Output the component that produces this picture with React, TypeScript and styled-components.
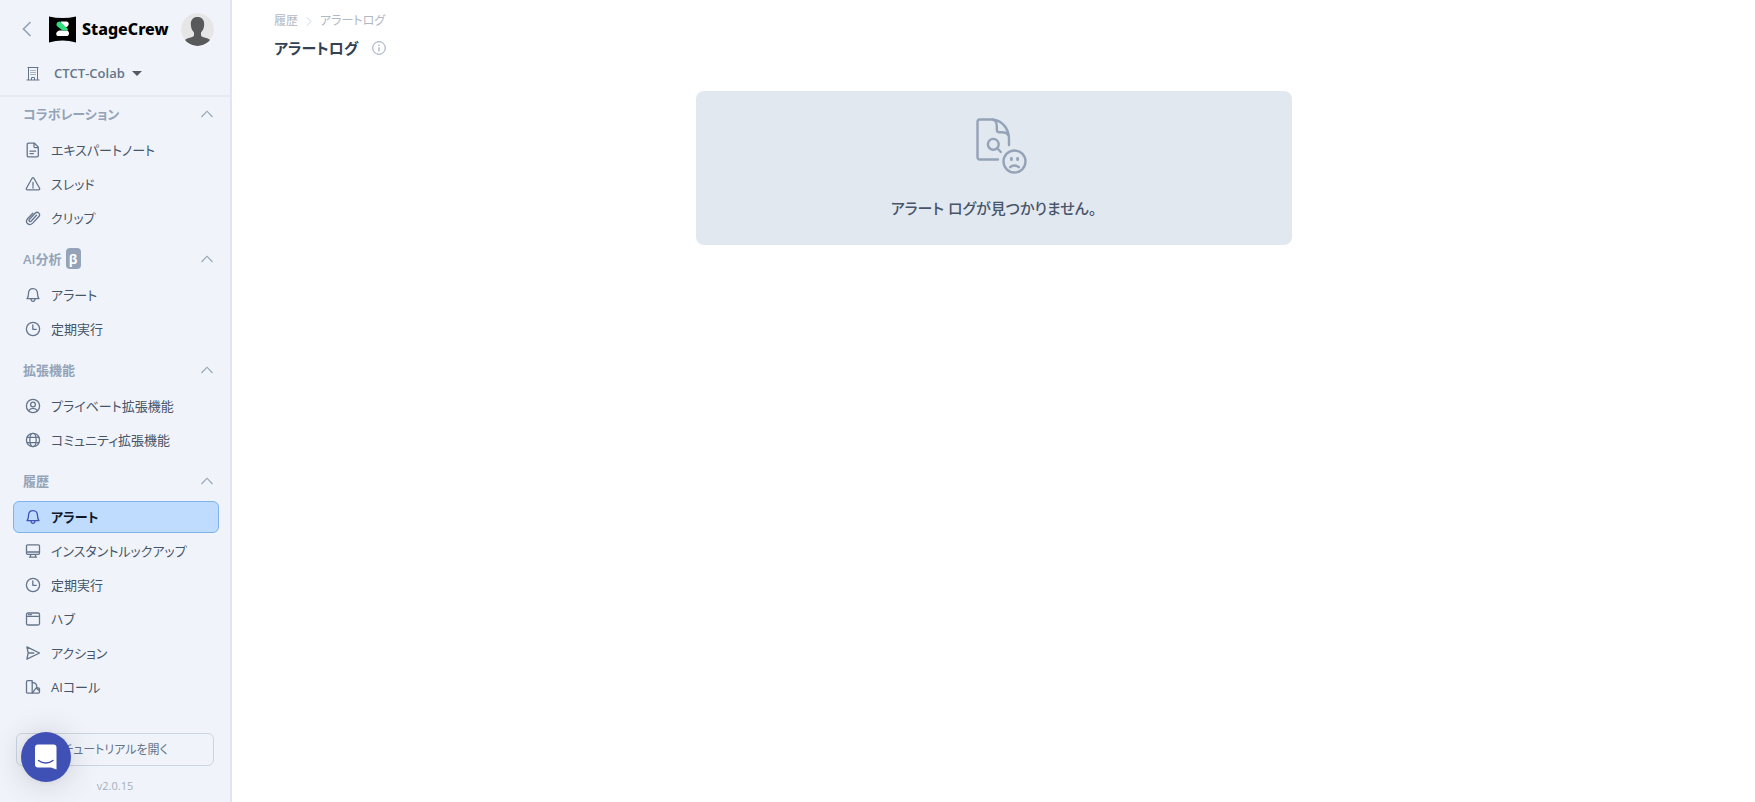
import React from "react";
import styled, { createGlobalStyle, css } from "styled-components";

const GlobalStyle = createGlobalStyle`
  *, *::before, *::after { box-sizing: border-box; }
  body {
    margin: 0;
    background: #fff;
    color: #475569;
    font-family: "Open Sans", "Noto Sans CJK JP", sans-serif;
    font-size: 13px;
    line-height: 20px;
    font-feature-settings: "palt";
  }
  button { font: inherit; font-feature-settings: inherit; color: inherit; background: none; border: 0; padding: 0; cursor: pointer; }
  a { color: inherit; text-decoration: none; }
  h1, h2, p, ul { margin: 0; padding: 0; }
  svg { display: block; flex: none; }
`;

const Shell = styled.div`
  display: flex;
  min-height: 100vh;
`;

const Sidebar = styled.aside`
  display: flex;
  flex-direction: column;
  flex: none;
  width: 232px;
  background: #f0f4fa;
  border-right: 2px solid #dfe6f1;
`;

const SidebarTop = styled.header`
  display: flex;
  flex-direction: column;
  padding: 12px 16px 11px 20px;
  border-bottom: 2px solid #e6ebf3;
`;

const BrandRow = styled.div`
  display: flex;
  align-items: center;
  height: 34px;
`;

const IconButton = styled.button`
  display: flex;
  align-items: center;
  justify-content: center;
  color: #94a3b8;
`;

const Brand = styled.a`
  display: flex;
  align-items: center;
  gap: 6px;
  margin-left: 15px;
  color: #000;
  font-family: "Noto Sans", sans-serif;
  font-size: 16px;
  font-weight: 800;
`;

const AvatarButton = styled(IconButton)`
  margin-left: auto;
  border-radius: 50%;
  overflow: hidden;
`;

const Workspace = styled.button`
  display: flex;
  align-items: center;
  align-self: flex-start;
  margin-top: 16px;
  padding-left: 6px;
  height: 22px;
  color: #64748b;
  font-size: 13px;
  font-weight: 600;
  gap: 7px;

  svg:first-child { margin-right: 7px; }
`;

const Nav = styled.nav`
  flex: 1;
  padding: 0 11px 0 13px;
`;

const Section = styled.section`
  margin-bottom: 8px;
`;

const SectionToggle = styled.button`
  display: flex;
  align-items: center;
  width: 100%;
  height: 33px;
  padding: 0 6px 0 10px;
  margin-bottom: 4px;
  color: #94a3b8;
  font-weight: 600;

  svg { margin-left: auto; }
`;

const Badge = styled.span`
  display: flex;
  align-items: center;
  justify-content: center;
  width: 15px;
  height: 21px;
  margin-left: 4px;
  border-radius: 4px;
  background: #94a3b8;
  color: #fff;
  font-weight: 700;
`;

const NavList = styled.ul`
  display: flex;
  flex-direction: column;
  gap: 2px;
  list-style: none;
`;

const NavLink = styled.a<{ $active?: boolean }>`
  display: flex;
  align-items: center;
  gap: 10px;
  height: 32px;
  padding: 0 11px;
  border: 1px solid transparent;
  border-radius: 6px;
  color: #475569;

  svg { color: #64748b; }

  ${(p) =>
    p.$active &&
    css`
      background: #bfdbfe;
      border-color: #7fb3ec;
      color: #0f172a;
      font-weight: 700;
      svg { color: #3f51b5; }
    `}
`;

const SidebarBottom = styled.footer`
  display: flex;
  flex-direction: column;
  gap: 10px;
  padding: 0 16px 6px;
  text-align: center;
`;

const TutorialButton = styled.button`
  height: 33px;
  border: 1px solid #cbd5e1;
  border-radius: 6px;
  color: #64748b;
  font-size: 12px;
`;

const Version = styled.p`
  color: #a3afc0;
  font-size: 11px;
`;

const ChatLauncher = styled.button`
  position: fixed;
  left: 21px;
  bottom: 20px;
  display: flex;
  align-items: center;
  justify-content: center;
  width: 50px;
  height: 50px;
  border-radius: 50%;
  background: #3f51b5;
  box-shadow: 0 1px 6px rgba(0, 0, 0, 0.06), 0 2px 32px rgba(0, 0, 0, 0.16);
`;

const Main = styled.main`
  flex: 1;
  min-width: 0;
  padding: 11px 42px;
`;

const Crumbs = styled.nav`
  display: flex;
  align-items: center;
  gap: 8px;
  color: #b0b8c6;
  font-size: 12px;
`;

const TitleRow = styled.div`
  display: flex;
  align-items: center;
  gap: 14px;
  margin-top: 5px;
  height: 24px;
`;

const Title = styled.h1`
  color: #334155;
  font-size: 15px;
  line-height: 24px;
  font-weight: 600;
`;

const EmptyCard = styled.section`
  display: flex;
  flex-direction: column;
  align-items: center;
  gap: 22px;
  max-width: 596px;
  margin: 31px auto 0;
  padding: 26px 24px 25px;
  border-radius: 8px;
  background: #e2e8f0;
  color: #475569;
  font-size: 15px;
  line-height: 24px;
  font-weight: 500;
`;

type IconName =
  | "note" | "warning" | "clip" | "bell" | "clock" | "user"
  | "globe" | "monitor" | "window" | "send" | "swatch";

const iconShapes: Record<IconName, React.ReactNode> = {
  note: (
    <>
      <path d="M3.5 1.2h6l3.8 3.9v8.4c0 .8-.5 1.3-1.3 1.3H3.5c-.8 0-1.3-.5-1.3-1.3v-11c0-.8.5-1.3 1.3-1.3z" />
      <path d="M9 1.4v3c0 .8.4 1.2 1.2 1.2h3M5 9.2h5.6M5 11.6h3.4" />
    </>
  ),
  warning: (
    <>
      <path d="M7.1 2.2c.4-.7 1.4-.7 1.8 0l5.7 10c.4.8-.1 1.6-1 1.6H2.4c-.9 0-1.4-.8-1-1.6z" />
      <path d="M8 6.4v3.4M8 11v1" />
    </>
  ),
  clip: (
    <path d="M11.5 5.3 6.3 11c-.6.6-1.400.7-1.900.2-.5-.5-.5-1.300.1-1.900l5.600-6c1.100-1.100 2.700-1.200 3.700-.2s1 2.500-.1 3.700l-6 6.300c-1.600 1.600-3.800 1.800-5.200.5-1.400-1.400-1.200-3.500.3-5.100l5-5.300" />
  ),
  bell: (
    <path d="M2 11.600h12c-1.300-1.300-1.500-2.500-1.500-5 0-2.900-1.800-5-4.500-5s-4.500 2.100-4.500 5c0 2.500-.2 3.700-1.500 5zM5.900 11.800c.1 1.600.8 2.500 2.100 2.500s2-.9 2.100-2.500" />
  ),
  clock: (
    <>
      <circle cx="8" cy="8" r="6.600" />
      <path d="M7.800 4v4.300h3.400" />
    </>
  ),
  user: (
    <>
      <circle cx="8" cy="8" r="6.600" />
      <circle cx="8" cy="6.500" r="2.400" />
      <path d="M3.600 12.600c1-1.600 2.500-2.200 4.400-2.200s3.400.6 4.400 2.200" />
    </>
  ),
  globe: (
    <>
      <circle cx="8" cy="8" r="6.600" />
      <ellipse cx="8" cy="8" rx="3.200" ry="6.600" />
      <path d="M2.200 5.400h11.600M2.200 10.600h11.600" />
    </>
  ),
  monitor: (
    <path d="M2.700 1.900h10.600c.8 0 1.200.4 1.200 1.200v7c0 .8-.4 1.200-1.200 1.200H2.700c-.8 0-1.200-.4-1.200-1.200v-7c0-.8.4-1.200 1.200-1.200zM1.700 9h12.600M5.500 11.500v1.800M10.500 11.500v1.800M4.300 14.100h7.400" />
  ),
  window: (
    <path d="M3 2h10c1 0 1.500.5 1.500 1.500v9c0 1-.5 1.500-1.500 1.500H3c-1 0-1.500-.5-1.500-1.500v-9C1.500 2.500 2 2 3 2zM1.700 5.300h12.600M3.500 3.700h.8M5.500 3.700h.8" />
  ),
  send: <path d="M1.900 1.900 14.500 8 1.900 14.100l1.300-6.100zM3.400 8h5.400" />,
  swatch: (
    <>
      <path d="M2.600 1.700h4.600v12.500H2.600c-.7 0-1.100-.4-1.100-1.100V2.800c0-.7.400-1.100 1.100-1.100z" />
      <path d="M7.300 3.500c3 .1 4.600 1.800 4.500 4.700l-4.300 5.500M11.400 8.900h2c.7 0 1.100.4 1.100 1.100v3.100c0 .7-.4 1.100-1.100 1.100H7.300M11.300 9.100 14 11.500" />
    </>
  ),
};

const NavIcon = ({ name }: { name: IconName }) => (
  <svg width="16" height="16" viewBox="0 0 16 16" fill="none" stroke="currentColor" strokeWidth="1.3" strokeLinecap="round" strokeLinejoin="round" aria-hidden="true">
    {iconShapes[name]}
  </svg>
);

const LogoMark = () => (
  <svg width="27" height="27" viewBox="0 0 27 27" aria-hidden="true">
    <path d="M0 .5Q13.500 3.500 27 .5v26Q13.500 22.500 0 26.500z" fill="#000" />
    <path d="M11.500 5.600h6c2.900 0 3 4.300.3 5.300l-2.600 1.100z" fill="#fff" />
    <path d="M10 14.400h7.500c3.400.3 3.400 5.500 0 5.700h-8c-2.900 0-3-3.900-.5-4.900z" fill="#fff" />
    <path d="M10.900 5.600c-3.300 0-4.500 3.400-2.200 5.200l4.900 3.600h5.300c.2-1-.3-1.700-1-2.300z" fill="#2fe07d" />
  </svg>
);

const Avatar = () => (
  <svg width="33" height="33" viewBox="0 0 33 33" aria-hidden="true">
    <circle cx="16.500" cy="16.500" r="16.500" fill="#e6e6e6" />
    <path d="M16.500 4c4.200 0 6.700 2.700 6.700 7 0 3.700-1.200 6.500-3.200 8.500v2.600c0 1.300 1 1.900 3.300 2.500 2.600.6 4.600 1.200 5.800 2.500-3 3.600-7.200 5.900-12.600 5.900S6.900 30.700 3.900 27.100c1.200-1.300 3.200-1.900 5.800-2.500 2.300-.6 3.300-1.200 3.300-2.500v-2.600c-2-2-3.200-4.800-3.200-8.500 0-4.300 2.500-7 6.700-7z" fill="#58595b" />
  </svg>
);

const Chevron = () => (
  <svg width="12" height="8" viewBox="0 0 12 8" fill="none" stroke="currentColor" strokeWidth="1.100" aria-hidden="true">
    <path d="m.5 7 5.500-5.800L11.500 7" />
  </svg>
);

const EmptyIllustration = () => (
  <svg width="67" height="57" viewBox="-16 0 67 57" fill="none" stroke="#94a3b8" strokeWidth="2.400" strokeLinecap="round" strokeLinejoin="round" aria-hidden="true">
    <path d="M22 42.500H4c-1.600 0-2.500-.9-2.500-2.500V5c0-1.600.9-2.500 2.500-2.500h12.500C26.500 3.500 33 12 33 22v6" />
    <path d="M17 2.600c2.500.8 3.800 3.400 3.800 6.700v3.400c0 1.700.8 2.500 2.500 2.500h2.500c3 0 5.300.8 6.300 2.700" />
    <circle cx="17.300" cy="27.300" r="5.400" />
    <path d="m21.300 31.300 3.500 3.700" />
    <circle cx="38.500" cy="44.500" r="11" />
    <path d="M34.200 50.200c2.400-2.300 6.200-2.300 8.600 0" />
    <path d="M35.400 41.300v1.400M41.600 41.300v1.400" strokeWidth="2.800" />
  </svg>
);

interface Item { label: string; icon: IconName; active?: boolean }
interface Group { title: string; badge?: string; items: Item[] }

const groups: Group[] = [
  {
    title: "コラボレーション",
    items: [
      { label: "エキスパートノート", icon: "note" },
      { label: "スレッド", icon: "warning" },
      { label: "クリップ", icon: "clip" },
    ],
  },
  {
    title: "AI分析",
    badge: "β",
    items: [
      { label: "アラート", icon: "bell" },
      { label: "定期実行", icon: "clock" },
    ],
  },
  {
    title: "拡張機能",
    items: [
      { label: "プライベート拡張機能", icon: "user" },
      { label: "コミュニティ拡張機能", icon: "globe" },
    ],
  },
  {
    title: "履歴",
    items: [
      { label: "アラート", icon: "bell", active: true },
      { label: "インスタントルックアップ", icon: "monitor" },
      { label: "定期実行", icon: "clock" },
      { label: "ハブ", icon: "window" },
      { label: "アクション", icon: "send" },
      { label: "AIコール", icon: "swatch" },
    ],
  },
];

export default function App() {
  return (
    <>
      <GlobalStyle />
      <Shell>
        <Sidebar>
          <SidebarTop>
            <BrandRow>
              <IconButton aria-label="サイドバーを閉じる">
                <svg width="14" height="16" viewBox="0 0 14 16" fill="none" stroke="currentColor" strokeWidth="1.700" aria-hidden="true">
                  <path d="M10.500 1 3.500 8l7 7" />
                </svg>
              </IconButton>
              <Brand href="#">
                <LogoMark />
                StageCrew
              </Brand>
              <AvatarButton aria-label="アカウント">
                <Avatar />
              </AvatarButton>
            </BrandRow>
            <Workspace aria-haspopup="listbox">
              <svg width="14" height="15" viewBox="0 0 14 15" fill="none" stroke="currentColor" aria-hidden="true">
                <path d="M2.500 14V1.500h9V14M.5 14h13M1.500 1.500h11M5.500 14v-2.500h3V14" />
                <path d="M4.500 4.500h1M6.500 4.500h1M8.500 4.500h1M4.500 6.500h1M6.500 6.500h1M8.500 6.500h1M4.500 8.500h1M6.500 8.500h1M8.500 8.500h1" />
              </svg>
              CTCT-Colab
              <svg width="10" height="5" viewBox="0 0 10 5" aria-hidden="true">
                <path d="M0 0h10L5 5z" fill="#555b66" />
              </svg>
            </Workspace>
          </SidebarTop>
          <Nav aria-label="メイン">
            {groups.map((g) => (
              <Section key={g.title}>
                <SectionToggle aria-expanded="true">
                  {g.title}
                  {g.badge && <Badge>{g.badge}</Badge>}
                  <Chevron />
                </SectionToggle>
                <NavList>
                  {g.items.map((it) => (
                    <li key={it.label}>
                      <NavLink href="#" $active={it.active} aria-current={it.active ? "page" : undefined}>
                        <NavIcon name={it.icon} />
                        {it.label}
                      </NavLink>
                    </li>
                  ))}
                </NavList>
              </Section>
            ))}
          </Nav>
          <SidebarBottom>
            <TutorialButton>チュートリアルを開く</TutorialButton>
            <Version>v2.0.15</Version>
          </SidebarBottom>
        </Sidebar>
        <Main>
          <Crumbs aria-label="パンくずリスト">
            <a href="#">履歴</a>
            <svg width="6" height="9" viewBox="0 0 6 9" fill="none" stroke="#cbd5e1" aria-hidden="true">
              <path d="m1 .5 4 4-4 4" />
            </svg>
            <span>アラートログ</span>
          </Crumbs>
          <TitleRow>
            <Title>アラートログ</Title>
            <IconButton aria-label="情報">
              <svg width="14" height="14" viewBox="0 0 14 14" fill="none" stroke="currentColor" aria-hidden="true">
                <circle cx="7" cy="7" r="6.300" />
                <path d="M7 6.300v4M7 3.700v1.200" strokeWidth="1.200" />
              </svg>
            </IconButton>
          </TitleRow>
          <EmptyCard>
            <EmptyIllustration />
            <p>アラート ログが見つかりません。</p>
          </EmptyCard>
        </Main>
      </Shell>
      <ChatLauncher aria-label="チャットを開く">
        <svg width="24" height="26" viewBox="0 0 24 26" aria-hidden="true">
          <path d="M4 .5h15.500A2.800 2.800 0 0 1 22.500 3.500V25.500l-5.500-2H4a3 3 0 0 1-3-3v-17a3 3 0 0 1 3-3z" fill="#fff" />
          <path d="M4.500 16.500c4.300 3.400 10.200 3.400 14.500 0" fill="none" stroke="#3f51b5" strokeWidth="1.400" strokeLinecap="round" />
        </svg>
      </ChatLauncher>
    </>
  );
}
